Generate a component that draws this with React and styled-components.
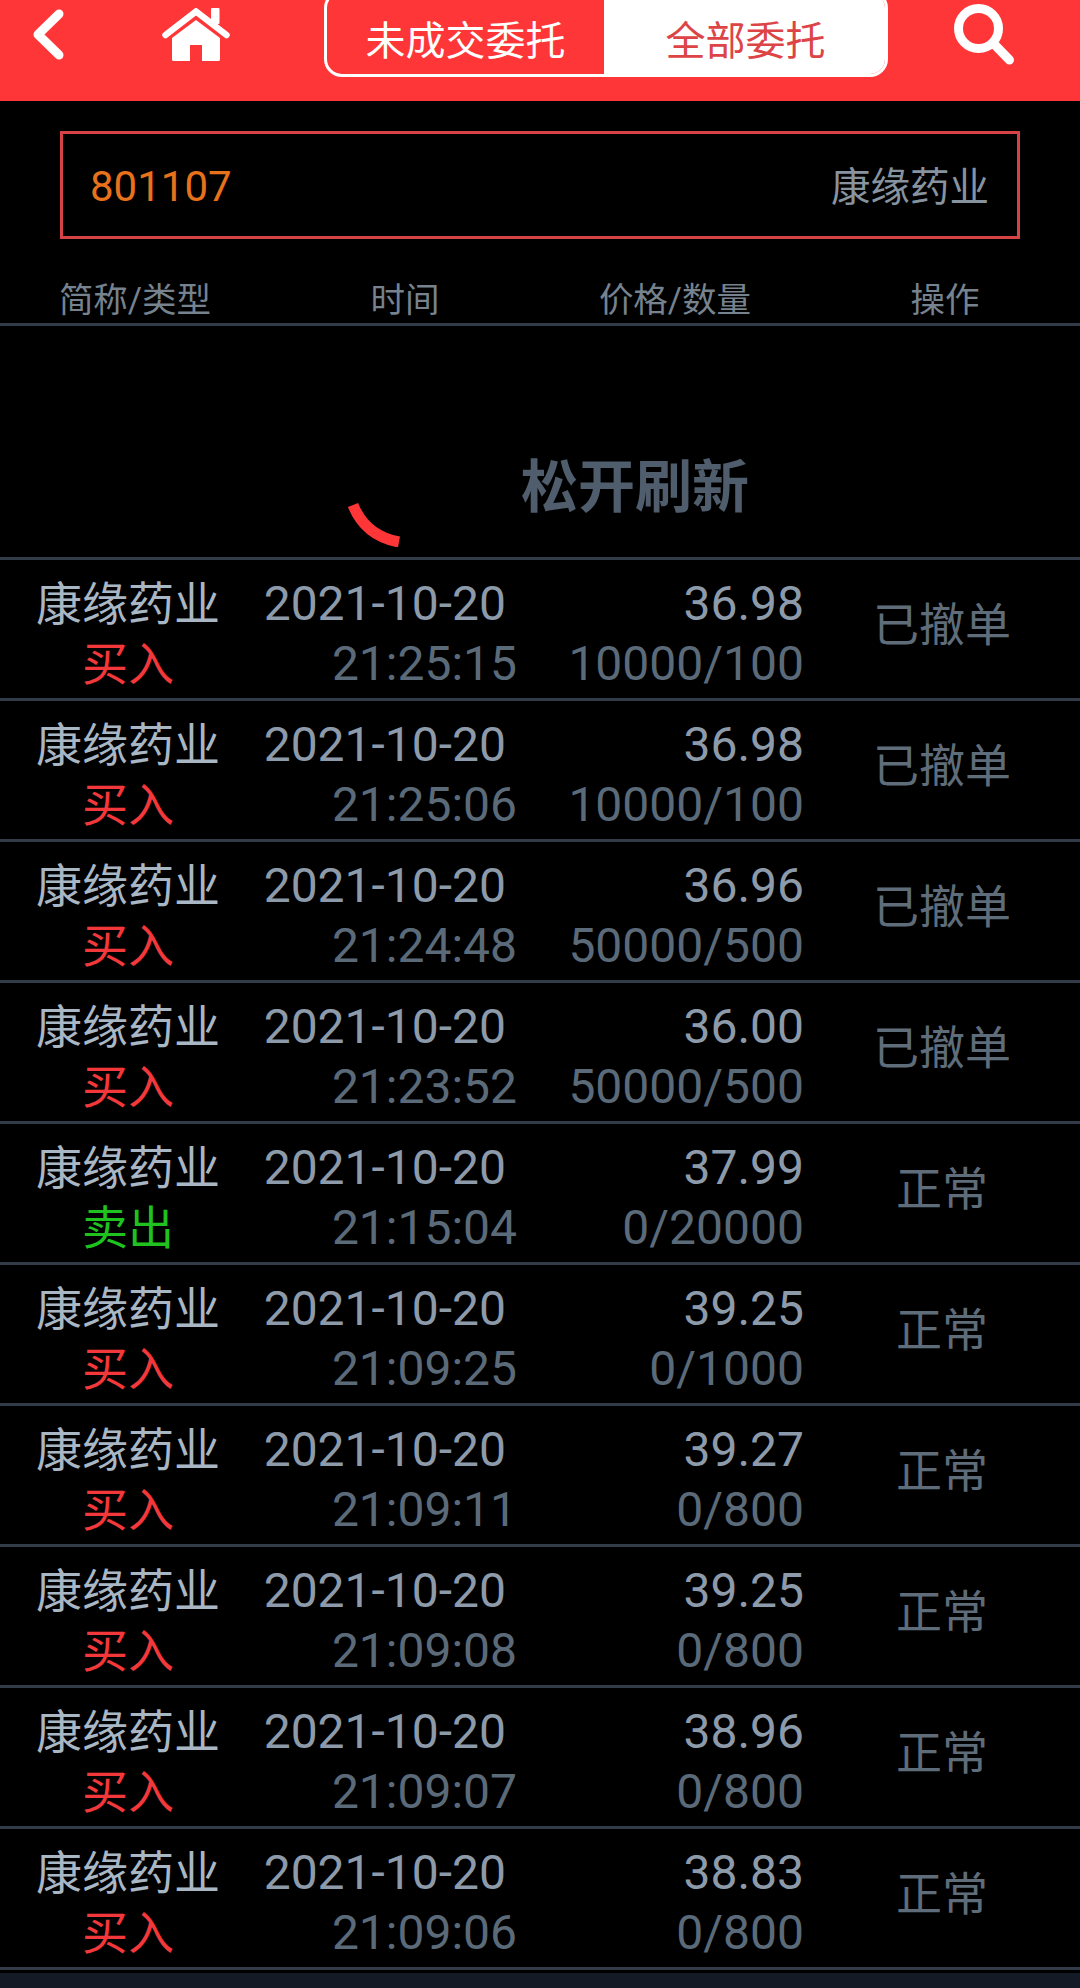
import styled, { createGlobalStyle } from 'styled-components';

const orders = [
  ['买入', '21:25:15', '36.98', '10000/100', '已撤单'],
  ['买入', '21:25:06', '36.98', '10000/100', '已撤单'],
  ['买入', '21:24:48', '36.96', '50000/500', '已撤单'],
  ['买入', '21:23:52', '36.00', '50000/500', '已撤单'],
  ['卖出', '21:15:04', '37.99', '0/20000', '正常'],
  ['买入', '21:09:25', '39.25', '0/1000', '正常'],
  ['买入', '21:09:11', '39.27', '0/800', '正常'],
  ['买入', '21:09:08', '39.25', '0/800', '正常'],
  ['买入', '21:09:07', '38.96', '0/800', '正常'],
  ['买入', '21:09:06', '38.83', '0/800', '正常'],
];

function App() {
  return (
    <Page>
      <GlobalStyle />
      <Header>
        <BackIcon viewBox="0 0 31 51">
          <path d="M26 5 L5 25.5 L26 46" />
        </BackIcon>
        <HomeIcon viewBox="0 0 68 54">
          <rect x="49" y="0" width="8.5" height="16" rx="1" />
          <path d="M34 12 L58 30 V51.5 A1.5 1.5 0 0 1 56.5 53 H40 V37 H28 V53 H11.5 A1.5 1.5 0 0 1 10 51.5 V30 Z" />
          <path className="roof" d="M3.5 27 L34 3.5 L64.5 27" />
        </HomeIcon>
        <Tabs>
          <Tab>未成交委托</Tab>
          <Tab $active>全部委托</Tab>
        </Tabs>
        <SearchIcon viewBox="0 0 60 61">
          <circle cx="24.5" cy="24.5" r="20" />
          <path d="M40 40 L55.5 56" />
        </SearchIcon>
      </Header>

      <StockBox>
        <StockCode>801107</StockCode>
        <StockName>康缘药业</StockName>
      </StockBox>

      <Columns>
        <span>简称/类型</span>
        <span>时间</span>
        <span>价格/数量</span>
        <span>操作</span>
      </Columns>

      <PullArea>
        <Spinner viewBox="0 0 62 46">
          <path d="M6 4 C14 24 30 37 52 41" />
        </Spinner>
        <PullText>松开刷新</PullText>
      </PullArea>

      {orders.map((o, i) => (
        <Row key={i}>
          <NameCell>
            <Name>康缘药业</Name>
            <Side $sell={o[0] === '卖出'}>{o[0]}</Side>
          </NameCell>
          <TimeCell>
            <Primary>2021-10-20</Primary>
            <Secondary>{o[1]}</Secondary>
          </TimeCell>
          <PriceCell>
            <Primary>{o[2]}</Primary>
            <Secondary>{o[3]}</Secondary>
          </PriceCell>
          <Status>{o[4]}</Status>
        </Row>
      ))}
      <Footer />
    </Page>
  );
}

export default App;

const GlobalStyle = createGlobalStyle`
  html, body {
    margin: 0;
    padding: 0;
    background: #000;
  }
  * {
    box-sizing: border-box;
  }
`;

const Page = styled.div`
  width: 1080px;
  height: 1988px;
  overflow: hidden;
  background: #000;
  font-family: Roboto, 'Noto Sans CJK SC', sans-serif;
`;

const Header = styled.div`
  display: flex;
  align-items: flex-start;
  height: 101px;
  background: #ff3638;
  overflow: hidden;
`;

const BackIcon = styled.svg`
  width: 31px;
  height: 51px;
  margin: 9px 0 0 33px;
  fill: none;
  stroke: #fff;
  stroke-width: 9;
  stroke-linecap: round;
  stroke-linejoin: round;
`;

const HomeIcon = styled.svg`
  width: 68px;
  height: 54px;
  margin: 8px 0 0 98px;
  fill: #fff;
  .roof {
    fill: none;
    stroke: #fff;
    stroke-width: 6.5;
    stroke-linecap: round;
  }
`;

const Tabs = styled.div`
  display: flex;
  width: 564px;
  height: 87px;
  margin: -10px 0 0 94px;
  border: 3px solid #fff;
  border-radius: 18px;
  overflow: hidden;
`;

const Tab = styled.div`
  flex: none;
  width: ${(p) => (p.$active ? '283px' : '277px')};
  padding-top: 8px;
  display: flex;
  align-items: center;
  justify-content: center;
  font-size: 40px;
  background: ${(p) => (p.$active ? '#fff' : 'transparent')};
  color: ${(p) => (p.$active ? '#dc4446' : '#fff')};
`;

const SearchIcon = styled.svg`
  width: 60px;
  height: 61px;
  margin: 4px 0 0 66px;
  fill: none;
  stroke: #fff;
  stroke-width: 9;
  stroke-linecap: round;
`;

const StockBox = styled.div`
  display: flex;
  justify-content: space-between;
  align-items: center;
  height: 108px;
  margin: 30px 60px 0;
  padding: 0 28px 0 27px;
  border: 3px solid #d64347;
`;

const StockCode = styled.span`
  padding-top: 2px;
  font-size: 42px;
  color: #e8721c;
`;

const StockName = styled.span`
  padding-bottom: 3px;
  font-size: 39.5px;
  color: #87939f;
`;

const Columns = styled.div`
  display: grid;
  grid-template-columns: repeat(4, 270px);
  align-items: center;
  height: 87px;
  padding-top: 31px;
  border-bottom: 3px solid #323c49;
  text-align: center;
  font-size: 34.5px;
  color: #76828e;
`;

const PullArea = styled.div`
  display: flex;
  align-items: flex-start;
  height: 234px;
  border-bottom: 3px solid #323c49;
`;

const Spinner = styled.svg`
  width: 62px;
  height: 46px;
  margin: 175px 0 0 347px;
  fill: none;
  stroke: #ff3638;
  stroke-width: 11;
`;

const PullText = styled.span`
  margin: 125px 0 0 112px;
  font-size: 57px;
  line-height: 74px;
  font-weight: 700;
  color: #4f5d6c;
`;

const Row = styled.div`
  display: grid;
  grid-template-columns: 256px 261px 287px 1fr;
  align-items: center;
  height: 141px;
  border-bottom: 3px solid #323c49;
`;

const NameCell = styled.div`
  display: flex;
  flex-direction: column;
  align-items: center;
  padding-top: 10px;
`;

const Name = styled.span`
  font-size: 46px;
  line-height: 60px;
  color: #a9b6c4;
`;

const Side = styled.span`
  font-size: 46px;
  line-height: 60px;
  color: ${(p) => (p.$sell ? '#1fc21f' : '#f2383a')};
`;

const TimeCell = styled.div`
  display: flex;
  flex-direction: column;
  align-items: flex-end;
  padding-top: 10px;
  & > span:first-child {
    margin-right: 11px;
  }
`;

const PriceCell = styled.div`
  display: flex;
  flex-direction: column;
  align-items: flex-end;
  padding-top: 10px;
`;

const Primary = styled.span`
  font-size: 48px;
  line-height: 60px;
  color: #8c9aaa;
`;

const Secondary = styled.span`
  font-size: 48px;
  line-height: 60px;
  color: #5b6a79;
`;

const Status = styled.div`
  padding-bottom: 16px;
  text-align: center;
  font-size: 46px;
  color: #5f6c7a;
`;

const Footer = styled.div`
  height: 20px;
  margin-top: 3px;
  background: #141b26;
`;
